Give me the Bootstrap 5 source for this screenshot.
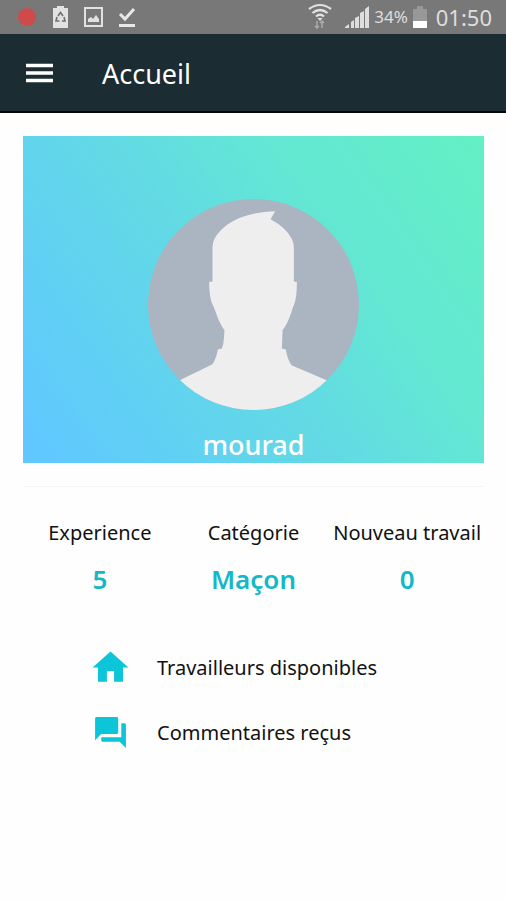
<!DOCTYPE html>
<html lang="fr">
<head>
<meta charset="utf-8">
<meta name="viewport" content="width=device-width, initial-scale=1">
<title>Accueil</title>
<link href="https://cdn.jsdelivr.net/npm/bootstrap@5.3.0/dist/css/bootstrap.min.css" rel="stylesheet">
<style>
body { font-family: "Noto Sans", sans-serif; background: #fefefe; color: #111; }
svg { display: block; flex: none; }
.status-bar { background: #787878; height: 34px; color: #dedede; padding: 0 14px 0 17px; }
.status-left { gap: 13px; }
.status-right { gap: 5px; }
.status-level { font-size: 17px; line-height: 32px; }
.status-clock { font-size: 22px; line-height: 32px; }
.app-bar { background: #1b2c33; height: 79px; border-bottom: 2px solid #02080b; padding: 3px 26px 0; gap: 48px; }
.app-title { font-size: 27px; line-height: 36px; color: #fff; }
.page-body { padding: 23px 22px 23px 23px; }
.profile { background: linear-gradient(55deg, #60c8ff 4%, #62dae4 46%, #63e7d4 68%, #63f0c4 100%); padding-top: 63px; }
.profile-name { font-size: 27px; line-height: 36px; padding: 17px 0 0; font-weight: 500; }
.stats { border-top: 1px solid #f4f4f4; margin-top: 23px; padding: 29px 0 38px; }
.stats-label { font-size: 20px; line-height: 34px; }
.stats-value { font-size: 26px; line-height: 36px; margin: 11px 0 0; font-weight: 600; color: #14b8c9; }
.menu-links { padding-left: 65px; }
.menu-item { height: 65px; gap: 25px; font-size: 20px; color: #111; }
.menu-icon { width: 44px; color: #0cc5d8; }
</style>
</head>
<body>
<div class="status-bar d-flex align-items-center justify-content-between">
  <div class="status-left d-flex align-items-center">
    <svg width="20" height="20" viewBox="0 0 20 20" aria-hidden="true"><circle cx="10" cy="10" r="9" fill="#cf4b4b"/></svg>
    <svg width="20" height="24" viewBox="0 0 20 24" aria-hidden="true"><path d="M7 1h7v2h4v20H3V3h4z" fill="#e2e2e2"/><path d="M8 11l2.500-3.500 2.500 3.500M14 12l1 4h-3M9.500 16H6l1-4" fill="none" stroke="#707070" stroke-width="1.600"/></svg>
    <svg width="20" height="22" viewBox="0 0 20 22" aria-hidden="true"><rect x="2" y="2" width="17" height="18" fill="none" stroke="#e2e2e2" stroke-width="2"/><path d="M5 16v-3l3-2 2 2 3-4 3 4v3z" fill="#e2e2e2"/></svg>
    <svg width="20" height="22" viewBox="0 0 20 22" aria-hidden="true"><path d="M4 8l5 5L18 3" fill="none" stroke="#e8e8e8" stroke-width="3"/><path d="M3 18h16v3H3z" fill="#e8e8e8"/></svg>
  </div>
  <div class="status-right d-flex align-items-center">
    <svg class="me-2" width="24" height="28" viewBox="0 0 24 28" aria-hidden="true"><g fill="none" stroke="#e2e2e2" stroke-width="2.200"><path d="M1 6q11-8 22 0M4.500 10q7.500-6 15 0M8 13.500q4-3.500 8 0"/></g><path d="M9.500 15h5L12 18z" fill="#e2e2e2"/><path d="M9 18v7m-2-2l2 2 2-2M14 25v-7m-2 2l2-2 2 2" fill="none" stroke="#aaa" stroke-width="1.500"/></svg>
    <svg width="24" height="24" viewBox="0 0 24 24" aria-hidden="true"><path d="M0 22l4-3v4H0zM6 17l3-2v8H6zM10 13l4-2v12h-4zM15 8l4-2v17h-4zM20 4l4-3v22h-4z" fill="#dedede"/></svg>
    <span class="status-level">34%</span>
    <svg width="14" height="24" viewBox="0 0 14 24" aria-hidden="true"><path d="M4 1h6v3h4v12H0V4h4z" fill="#989898"/><path d="M0 16h14v7H0z" fill="#fff"/></svg>
    <span class="status-clock ms-1">01:50</span>
  </div>
</div>
<header class="app-bar d-flex align-items-center">
  <button type="button" class="btn p-0 border-0 rounded-0" aria-label="Menu">
    <svg width="28" height="22" viewBox="0 0 28 22" aria-hidden="true"><path d="M0 2.500h27M0 10h27M0 17.500h27" stroke="#fff" stroke-width="3.400"/></svg>
  </button>
  <h1 class="app-title fw-normal m-0">Accueil</h1>
</header>
<main class="page-body">
  <section class="profile d-flex flex-column align-items-center">
    <svg width="211" height="211" viewBox="0 0 632 632" role="img" aria-label="Photo de profil">
      <defs><clipPath id="avatar-clip"><circle cx="316" cy="316" r="316"/></clipPath></defs>
      <g clip-path="url(#avatar-clip)">
        <path d="M0 0h632v632H0z" fill="#abb5c1"/>
        <path d="M381 37L367 61Q414 86 431 120Q437 132 437 150V248H446Q446 294 438 316C430 330 426 364 403 393L401 448 413 451Q417 480 430 498L535 543 632 632H0L95 543 193 495Q206 475 209 451L221 448Q227 440 229 393C208 364 204 336 193 315Q184 300 183 248H193V150Q193 125 205 109C240 62 301 39 381 37Z" fill="#eee"/>
      </g>
    </svg>
    <h2 class="profile-name text-white m-0">mourad</h2>
  </section>
  <section class="stats">
    <dl class="row g-0 text-center m-0">
      <div class="col-4"><dt class="stats-label fw-normal text-nowrap">Experience</dt><dd class="stats-value">5</dd></div>
      <div class="col-4"><dt class="stats-label fw-normal text-nowrap">Catégorie</dt><dd class="stats-value">Maçon</dd></div>
      <div class="col-4"><dt class="stats-label fw-normal text-nowrap">Nouveau travail</dt><dd class="stats-value">0</dd></div>
    </dl>
  </section>
  <nav class="menu-links d-flex flex-column" aria-label="Raccourcis">
    <a href="#travailleurs" class="menu-item d-flex align-items-center text-decoration-none">
      <span class="menu-icon d-flex justify-content-center"><svg width="43" height="43" viewBox="0 0 24 24" fill="currentColor" aria-hidden="true"><path d="M10 20v-6h4v6h5v-8h3L12 3 2 12h3v8z"/></svg></span>
      Travailleurs disponibles
    </a>
    <a href="#commentaires" class="menu-item d-flex align-items-center text-decoration-none">
      <span class="menu-icon d-flex justify-content-center"><svg width="37" height="37" viewBox="0 0 24 24" fill="currentColor" aria-hidden="true"><path d="M21 6h-2v9H6v2c0 .55.45 1 1 1h11l4 4V7c0-.55-.45-1-1-1zm-4 6V3c0-.55-.45-1-1-1H3c-.55 0-1 .45-1 1v14l4-4h10c.55 0 1-.45 1-1z"/></svg></span>
      Commentaires reçus
    </a>
  </nav>
</main>
<script src="https://cdn.jsdelivr.net/npm/bootstrap@5.3.0/dist/js/bootstrap.bundle.min.js"></script>
</body>
</html>
